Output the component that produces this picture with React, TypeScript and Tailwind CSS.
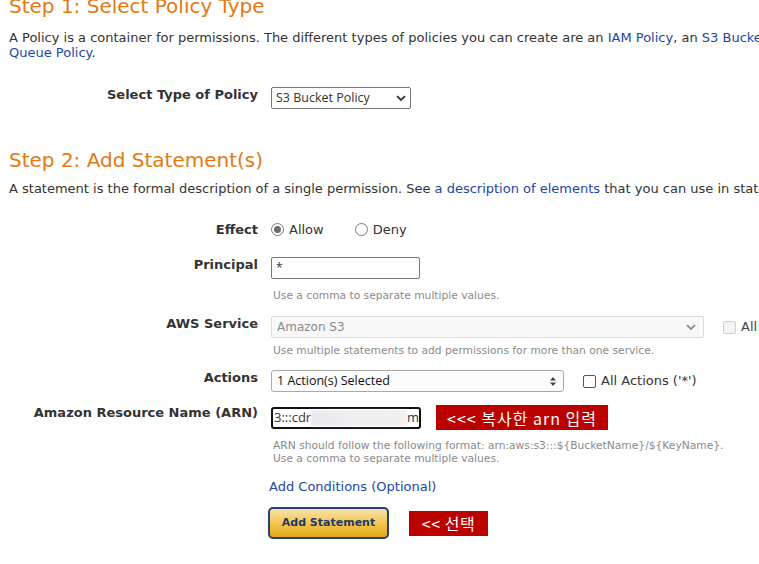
import React from "react";

const body = { fontFamily: '"DejaVu Sans", Verdana, sans-serif' };
const ui = { fontFamily: '"Open Sans", "Noto Sans", sans-serif' };
const kr = { fontFamily: '"Noto Sans CJK KR", "Noto Sans", sans-serif' };

function Chevron({ color = "#333" }: { color?: string }) {
  return (
    <svg width="10" height="7" viewBox="0 0 10 7">
      <path d="M1 1.2 L5 5 L9 1.2" fill="none" stroke={color} strokeWidth="1.8" />
    </svg>
  );
}

function Radio({ checked }: { checked?: boolean }) {
  return (
    <span className="w-[13px] h-[13px] rounded-full border border-[#7a7a7a] bg-white flex items-center justify-center">
      {checked && <span className="w-[7px] h-[7px] rounded-full bg-[#6d6d6d]" />}
    </span>
  );
}

function Checkbox({ disabled }: { disabled?: boolean }) {
  return (
    <span
      className={
        "block w-[13px] h-[13px] rounded-[2px] border " +
        (disabled ? "border-[#cfcfcf] bg-[#f4f4f4]" : "border-[#555] bg-white")
      }
    />
  );
}

function Row({ label, children, className = "" }: { label: string; children: React.ReactNode; className?: string }) {
  return (
    <div className={"flex " + className}>
      <div className="w-[258px] shrink-0 text-right font-bold text-[13px] leading-[15px] text-[#333]">
        {label}
      </div>
      <div className="ml-[13px] flex-1">{children}</div>
    </div>
  );
}

function Hint({ children }: { children: React.ReactNode }) {
  return <div className="text-[10.7px] leading-[13px] text-[#8a8a8a] pl-[2px]">{children}</div>;
}

export default function App() {
  return (
    <div className="w-[759px] h-[564px] overflow-hidden bg-white text-[#333] whitespace-nowrap" style={body}>
      <div className="pl-[9px]">
        <h1 className="text-[20px] leading-[24px] text-[#e47911] mt-[-6px]">Step 1: Select Policy Type</h1>
        <p className="text-[13px] leading-[15px] mt-[12px]">
          A Policy is a container for permissions. The different types of policies you can create are an{" "}
          <span className="text-[#1b46a9]">IAM Policy</span>, an{" "}
          <span className="text-[#1b46a9]">S3 Bucket Policy</span>, an SNS Topic Policy, a VPC Endpoint Policy, and an SQS
          <br />
          <span className="text-[#1b46a9]">Queue Policy</span>.
        </p>
      </div>

      <Row label="Select Type of Policy" className="mt-[27px]">
        <div className="w-[140px] h-[22px] border border-[#767676] rounded-[2px] flex items-center justify-between pl-[4px] pr-[4px]">
          <span className="text-[12.5px]" style={ui}>S3 Bucket Policy</span>
          <Chevron />
        </div>
      </Row>

      <div className="pl-[9px]">
        <h1 className="text-[20px] leading-[24px] text-[#e47911] mt-[39px]">Step 2: Add Statement(s)</h1>
        <p className="text-[13px] leading-[15px] mt-[9px]">
          A statement is the formal description of a single permission. See{" "}
          <span className="text-[#1b46a9]">a description of elements</span> that you can use in statements.
        </p>
      </div>

      <Row label="Effect" className="mt-[26px]">
        <div className="flex items-center text-[13px] leading-[15px] h-[15px]">
          <Radio checked />
          <span className="ml-[5px]">Allow</span>
          <span className="ml-[31px]"><Radio /></span>
          <span className="ml-[5px]">Deny</span>
        </div>
      </Row>

      <Row label="Principal" className="mt-[20px]">
        <div className="w-[149px] h-[22px] border border-[#767676] rounded-[2px] flex items-center pl-[4px] text-[12px]" style={ui}>
          *
        </div>
        <div className="mt-[10px]">
          <Hint>Use a comma to separate multiple values.</Hint>
        </div>
      </Row>

      <Row label="AWS Service" className="mt-[14px]">
        <div className="flex items-center">
          <div className="w-[433px] h-[22px] border border-[#dcdcdc] bg-[#f8f8f8] rounded-[2px] flex items-center justify-between pl-[5px] pr-[7px]">
            <span className="text-[12px] text-[#8c8c8c]">Amazon S3</span>
            <Chevron color="#8c8c8c" />
          </div>
          <span className="ml-[19px]"><Checkbox disabled /></span>
          <span className="ml-[5px] text-[13px] text-[#444]">All Actions ('*')</span>
        </div>
        <div className="mt-[6px]">
          <Hint>Use multiple statements to add permissions for more than one service.</Hint>
        </div>
      </Row>

      <Row label="Actions" className="mt-[13px]">
        <div className="flex items-center">
          <div className="w-[293px] h-[22px] border border-[#a9a9a9] rounded-[3px] bg-[#fcfcfc] flex items-center justify-between pl-[5px] pr-[7px]">
            <span className="text-[12.5px] text-[#111]" style={ui}>1 Action(s) Selected</span>
            <svg width="6" height="9" viewBox="0 0 6 9">
              <path d="M0 3.5 L3 0 L6 3.5 Z M0 5.5 L3 9 L6 5.5 Z" fill="#444" />
            </svg>
          </div>
          <span className="ml-[19px]"><Checkbox /></span>
          <span className="ml-[5px] text-[13px]">All Actions ('*')</span>
        </div>
      </Row>

      <Row label="Amazon Resource Name (ARN)" className="mt-[13px]">
        <div className="flex items-center">
          <div className="w-[150px] h-[22px] border-2 border-[#111] rounded-[3px] flex items-center pl-[1px] text-[13px] text-[#333]" style={ui}>
            <span>3:::cdr</span>
            <span className="w-[96px] h-[16px] bg-gradient-to-r from-[#e9e9ee] via-[#f0f0f3] to-[#f3f0ee] blur-[1px]" />
            <span>m</span>
          </div>
          <div className="ml-[15px] h-[25px] w-[172px] bg-[#bb0000] text-white text-[16px] tracking-[1px] flex items-center justify-center" style={kr}>
            &lt;&lt;&lt; 복사한 arn 입력
          </div>
        </div>
        <div className="mt-[9px]">
          <Hint>ARN should follow the following format: arn:aws:s3:::${"{BucketName}"}/${"{KeyName}"}.</Hint>
          <Hint>Use a comma to separate multiple values.</Hint>
        </div>
        <div className="mt-[14px] -ml-[2px] text-[13px] leading-[16px] text-[#1b46a9]">Add Conditions (Optional)</div>
        <div className="mt-[12px] -ml-[3px] flex items-center">
          <button className="w-[121px] h-[32px] rounded-[5px] border-2 border-[#23407a] bg-gradient-to-b from-[#f8e3a8] via-[#f2c74e] to-[#e4a90c] text-[11px] font-bold text-[#1f3868]" style={body}>
            Add Statement
          </button>
          <div className="ml-[20px] h-[25px] w-[79px] bg-[#bb0000] text-white text-[16px] tracking-[0.5px] flex items-center justify-center" style={kr}>
            &lt;&lt; 선택
          </div>
        </div>
      </Row>
    </div>
  );
}
